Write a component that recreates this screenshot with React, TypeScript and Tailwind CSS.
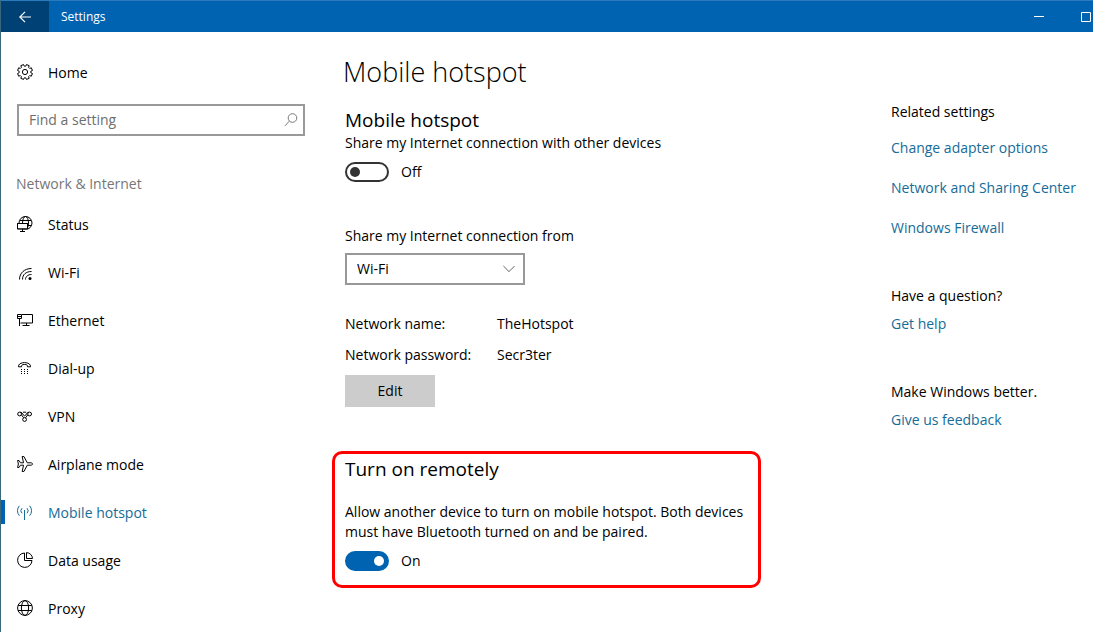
import type { ReactNode } from 'react'

// Eight-toothed cog outline, centred in a 16px box
const gearPoints = Array.from({ length: 8 }, (_, i) => {
  const point = (radius: number, offset: number) => {
    const a = ((i * 45 + 22.5 + offset) * Math.PI) / 180
    return `${(8 + radius * Math.cos(a)).toFixed(2)},${(8 + radius * Math.sin(a)).toFixed(2)}`
  }
  return [point(5.9, -15), point(7.6, -11), point(7.6, 11), point(5.9, 15)].join(' ')
}).join(' ')

function Icon({ children }: { children: ReactNode }) {
  return (
    <svg className="w-4 h-4 shrink-0" viewBox="0 0 16 16" fill="none" stroke="currentColor" aria-hidden="true">
      {children}
    </svg>
  )
}

const navItems = [
  {
    label: 'Status',
    icon: (
      <>
        <circle cx="8.5" cy="7" r="6.500" />
        <ellipse cx="8.5" cy="7" rx="3" ry="6.500" />
        <path d="M3 4.500h11M3 9.500h11.500" />
        <path d="M.5 7.500h10v5.500H.5z" fill="white" />
        <path d="M0 13.500h11v2.500H0z" fill="white" stroke="none" />
        <path d="M.5 7.500h10v5.500H.5zM5.500 13v2.500M3 15.500h5" />
      </>
    ),
  },
  {
    label: 'Wi-Fi',
    icon: (
      <>
        <path d="M2.5 15.500C2.500 9 7.500 4.500 14.500 4.500M5.500 15.500c0-5 3.500-8 9-8M8.500 15.500c0-3 2.500-5 6-5" />
        <circle cx="13" cy="14.500" r="1.500" fill="currentColor" stroke="none" />
      </>
    ),
  },
  {
    label: 'Ethernet',
    icon: (
      <path d="M5 2.500h10.500v8.500H3.500M.5 2.500h4v4h-4zM.5 4.500h4M2.500 6.500v7.500M9.500 11v2.500M5.500 13.500h7" />
    ),
  },
  {
    label: 'Dial-up',
    icon: (
      <>
        <path d="M1.500 6.800C.8 1.200 14.200 1.200 13.500 6.800H10.500C10.500 4.800 9.800 4.500 7.500 4.500S4.500 4.800 4.500 6.800z" />
        <path d="M4 9.500h1M7 9.500h1M10 9.500h1M4 11.500h1M7 11.500h1M10 11.500h1M4 13.500h1M7 13.500h1M10 13.500h1" />
      </>
    ),
  },
  {
    label: 'VPN',
    icon: (
      <>
        <circle cx="2.600" cy="6" r="1.900" />
        <circle cx="12.600" cy="6" r="1.900" />
        <circle cx="7.600" cy="11.500" r="1.900" />
        <path d="M3.400 4.200c2.500 0 2.400 3.600 4.200 3.600s1.700-3.600 4.200-3.600M4.400 6.800l2.200 3M10.800 6.800l-2.200 3M6 4.200h3.200" />
      </>
    ),
  },
  {
    label: 'Airplane mode',
    icon: (
      <path d="M15.500 8c0-.8-.8-1.200-1.700-1.200H10.300L6.900.5H5.200L6.500 6.800H3.500L2 4.500H.6L1.400 8 .6 11.500H2L3.500 9.200h3L5.200 15.500h1.700l3.400-6.300h3.500c.9 0 1.700-.4 1.700-1.200z" />
    ),
  },
  {
    label: 'Mobile hotspot',
    icon: (
      <path d="M7.500 6v10M5 9.300a3.600 3.600 0 0 1 0-5.100M10 9.300a3.600 3.600 0 0 0 0-5.100M2.400 11.700a7.300 7.300 0 0 1 0-9.900M12.600 11.700a7.300 7.300 0 0 0 0-9.900" />
    ),
  },
  {
    label: 'Data usage',
    icon: (
      <path d="M7.500 1A7.200 7.200 0 1 0 15 8.500H7.500zM9.500.6v5.900h6A6.200 6.200 0 0 0 9.500.6z" />
    ),
  },
  {
    label: 'Proxy',
    icon: (
      <>
        <circle cx="8" cy="8" r="7.400" />
        <ellipse cx="8" cy="8" rx="3.600" ry="7.400" />
        <path d="M1.200 5.500h13.600M1.200 10.500h13.600" />
      </>
    ),
  },
]

function TitleBar() {
  return (
    <header className="flex items-stretch h-8 bg-[#0063b1] border-t border-[#2a7abd] text-white">
      <button type="button" aria-label="Back" className="w-12 flex items-center justify-center bg-[#004175]">
        <svg className="w-3 h-3" viewBox="0 0 12 12" fill="none" stroke="currentColor" strokeWidth={1.2}>
          <path d="M12 6H.8M6 .8.8 6 6 11.200" />
        </svg>
      </button>
      <span className="flex-1 pl-3 self-center text-xs">Settings</span>
      <button type="button" aria-label="Minimize" className="w-11 flex items-center justify-center">
        <svg className="w-2.5 h-2.5" viewBox="0 0 10 10" stroke="currentColor">
          <path d="M0 4.500h10" />
        </svg>
      </button>
      <button type="button" aria-label="Maximize" className="pl-5 pr-0.5 flex items-center">
        <svg className="w-2.5 h-2.5" viewBox="0 0 10 10" fill="none" stroke="currentColor">
          <path d="M.5.5h9v9h-9z" />
        </svg>
      </button>
    </header>
  )
}

function Sidebar() {
  return (
    <nav className="w-76 shrink-0 pt-4" aria-label="Settings">
      <a href="#home" className="flex items-center h-12 pl-4">
        <Icon>
          <polygon points={gearPoints} strokeLinejoin="round" />
          <circle cx="8" cy="8" r="2.600" />
        </Icon>
        <span className="ml-3.75 pt-0.5">Home</span>
      </a>
      <div className="relative mt-2 ml-4">
        <input
          type="search"
          aria-label="Find a setting"
          placeholder="Find a setting"
          className="block w-full h-8 pl-2.5 pr-8 pb-0.5 border-2 border-[#999999] bg-white placeholder:text-[#6e6e6e] outline-none"
        />
        <svg className="absolute right-1.5 top-2 w-4 h-4 text-[#7a7a7a]" viewBox="0 0 16 16" fill="none" stroke="currentColor" aria-hidden="true">
          <circle cx="9.500" cy="6" r="4.300" />
          <path d="M6.400 9.100 2 13.800" />
        </svg>
      </div>
      <h2 className="mt-9.5 ml-3.75 text-[#767676]">Network &amp; Internet</h2>
      <ul className="mt-1.5">
        {navItems.map(({ label, icon }) => {
          const active = label === 'Mobile hotspot'
          return (
            <li key={label}>
              <a
                href="#"
                aria-current={active ? 'page' : undefined}
                className={`flex items-center h-12 ${active ? 'text-[#146c98]' : ''}`}
              >
                <span className={`w-1 h-6 mr-3 ${active ? 'bg-[#0063b1]' : ''}`} />
                <Icon>{icon}</Icon>
                <span className="ml-3.75 pt-0.5">{label}</span>
              </a>
            </li>
          )
        })}
      </ul>
    </nav>
  )
}

function Toggle({ label, on = false }: { label: string; on?: boolean }) {
  return (
    <label className="flex items-center gap-3 w-fit">
      <input
        type="checkbox"
        role="switch"
        aria-label={label}
        defaultChecked={on}
        className="appearance-none flex items-center w-11 h-5 px-0.75 border-2 border-[#333333] rounded-full before:content-[''] before:w-2.5 before:h-2.5 before:rounded-full before:bg-[#333333] checked:justify-end checked:bg-[#0063b1] checked:border-[#0063b1] checked:before:bg-white"
      />
      {on ? 'On' : 'Off'}
    </label>
  )
}

function HotspotSettings() {
  return (
    <main className="flex-1 min-w-0 pl-10 pt-5">
      <h1 className="-ml-0.5 text-[27px] leading-10 font-light">Mobile hotspot</h1>
      <h2 className="mt-4 text-[19px] leading-6">Mobile hotspot</h2>
      <p className="mt-px mb-2.25">Share my Internet connection with other devices</p>
      <Toggle label="Share my Internet connection with other devices" />

      <label htmlFor="source" className="block mt-11">
        Share my Internet connection from
      </label>
      <div className="relative mt-1.75 w-45">
        <select
          id="source"
          defaultValue="Wi-Fi"
          className="appearance-none block w-full h-8 pl-2.5 border-2 border-[#999999] bg-white"
        >
          <option>Wi-Fi</option>
          <option>Ethernet</option>
        </select>
        <svg className="absolute right-2.5 top-2.5 w-3 h-3 pointer-events-none text-[#666666]" viewBox="0 0 12 12" fill="none" stroke="currentColor" aria-hidden="true">
          <path d="M.4 3 6 8.600 11.600 3" />
        </svg>
      </div>

      <dl className="mt-7.25 grid grid-cols-[152px_auto] gap-y-2.75">
        <dt>Network name:</dt>
        <dd>TheHotspot</dd>
        <dt>Network password:</dt>
        <dd>Secr3ter</dd>
      </dl>
      <button type="button" className="mt-2.5 w-22.5 h-8 bg-[#cccccc]">
        Edit
      </button>

      <section className="mt-11 -ml-3.25 w-107.25 pl-2.5 pt-0.75 pb-3.5 border-3 border-[#ff0000] rounded-[10px]">
        <h2 className="text-[19px] leading-6">Turn on remotely</h2>
        <p className="mt-5.25 mb-2.25">
          Allow another device to turn on mobile hotspot. Both devices
          <br />
          must have Bluetooth turned on and be paired.
        </p>
        <Toggle label="Turn on remotely" on />
      </section>
    </main>
  )
}

function RelatedSettings() {
  return (
    <aside className="w-50.5 shrink-0 pt-17.5 whitespace-nowrap">
      <h2>Related settings</h2>
      <ul className="mt-4 flex flex-col gap-5 text-[#146c98]">
        <li><a href="#adapter">Change adapter options</a></li>
        <li><a href="#sharing">Network and Sharing Center</a></li>
        <li><a href="#firewall">Windows Firewall</a></li>
      </ul>
      <h2 className="mt-12 mb-2">Have a question?</h2>
      <a href="#help" className="text-[#146c98]">Get help</a>
      <h2 className="mt-12 mb-2">Make Windows better.</h2>
      <a href="#feedback" className="text-[#146c98]">Give us feedback</a>
    </aside>
  )
}

export default function App() {
  return (
    <div className="min-h-screen bg-white border-l border-[#39687c] font-['Open_Sans',sans-serif] text-sm text-black">
      <TitleBar />
      <div className="flex">
        <Sidebar />
        <HotspotSettings />
        <RelatedSettings />
      </div>
    </div>
  )
}
